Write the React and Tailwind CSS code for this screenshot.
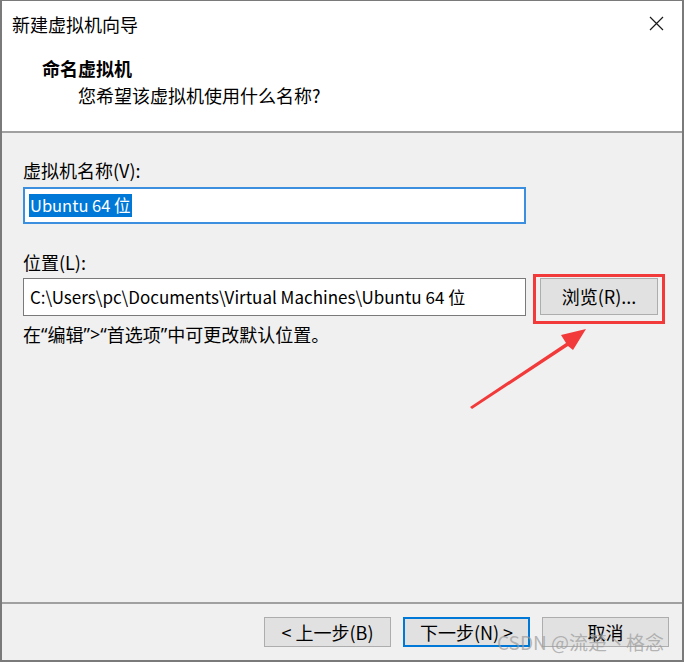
import React from "react"

const font = { fontFamily: '"Noto Sans CJK SC", "Noto Sans", sans-serif' }
const latin = { fontFamily: '"Noto Sans", "Noto Sans CJK SC", sans-serif' }

function WinButton({ children, primary }) {
  return (
    <div
      className={`flex h-[30px] w-[127px] items-center justify-center bg-[#e1e1e1] text-[18px] text-black ${
        primary ? "border-2 border-[#0078d7]" : "border border-[#adadad]"
      }`}
    >
      {children}
    </div>
  )
}

export default function App() {
  return (
    <div className="relative h-[663px] w-[684px] bg-white" style={font}>
      <div className="flex h-[662px] w-[684px] flex-col border-t border-r-2 border-b-2 border-l-2 border-[#7a7a7a]">
        {/* title bar */}
        <div className="flex h-[45px] items-center justify-between bg-white pl-[10px] pr-[18px]">
          <span className="text-[18px] leading-none text-black">新建虚拟机向导</span>
          <svg width="15" height="15" viewBox="0 0 15 15">
            <path d="M1 1 L14 14 M14 1 L1 14" stroke="#1a1a1a" strokeWidth="1.2" fill="none" />
          </svg>
        </div>

        {/* header */}
        <div className="flex h-[85px] flex-col bg-white pt-[10px]">
          <div className="flex h-[24px] items-center pl-[40px] text-[18px] font-bold text-black">命名虚拟机</div>
          <div className="mt-[3px] flex h-[24px] items-center pl-[76px] text-[18px] text-black">您希望该虚拟机使用什么名称?</div>
        </div>
        <div className="h-[2px] bg-[#a0a0a0]" />

        {/* body */}
        <div className="relative flex flex-1 flex-col bg-[#f0f0f0] pt-[25px] pl-[21px]">
          <div className="flex h-[24px] items-center text-[18px] text-black">虚拟机名称(V):</div>
          <div className="mt-[5px] flex h-[37px] w-[503px] items-center border-2 border-[#3c8fdf] bg-white pl-[4px]">
            <span className="flex h-[23px] items-center bg-[#0078d7] pl-[1px] pr-[1px] text-[16.5px] text-white">Ubuntu 64 位</span>
          </div>

          <div className="mt-[26px] flex h-[24px] items-center text-[18px] text-black">位置(L):</div>
          <div className="relative mt-[4px] flex items-start">
            <div className="flex h-[38px] w-[503px] items-center border border-[#7a7a7a] bg-white pl-[6px] text-[17px] text-black">
              C:\Users\pc\Documents\Virtual Machines\Ubuntu 64 位
            </div>
            <div className="ml-[14px] flex h-[37px] w-[118px] items-center justify-center border border-[#adadad] bg-[#e1e1e1] text-[18px] text-black">
              浏览(R)...
            </div>
            {/* red annotation box */}
            <div className="pointer-events-none absolute left-[510px] top-[-4px] h-[50px] w-[132px] border-[3px] border-[#f23a3a]" />
          </div>
          <div className="mt-[6px] flex h-[24px] items-center text-[18px] text-black">
            在<span style={latin}>“</span>编辑<span style={latin}>”&gt;“</span>首选项<span style={latin}>”</span>中可更改默认位置。
          </div>
        </div>

        <div className="h-[2px] bg-[#a0a0a0]" />
        {/* footer */}
        <div className="flex h-[56px] items-start justify-end gap-[12px] bg-[#f0f0f0] pt-[13px] pr-[13px]">
          <WinButton>&lt; 上一步(B)</WinButton>
          <WinButton primary>下一步(N) &gt;</WinButton>
          <WinButton>取消</WinButton>
        </div>
      </div>

      {/* red annotation arrow */}
      <svg className="pointer-events-none absolute left-0 top-0" width="684" height="663">
        <path d="M470 407 L566 343 L561 335 L586 329 L573 350 L568 346 L472 409 Z" fill="#f23a3a" />
      </svg>

      {/* watermark */}
      <div className="pointer-events-none absolute left-[497px] top-[629px] text-[19px] leading-[26px] text-[#9a9a9a]/70">
        CSDN @流楚丶格念
      </div>
    </div>
  )
}
